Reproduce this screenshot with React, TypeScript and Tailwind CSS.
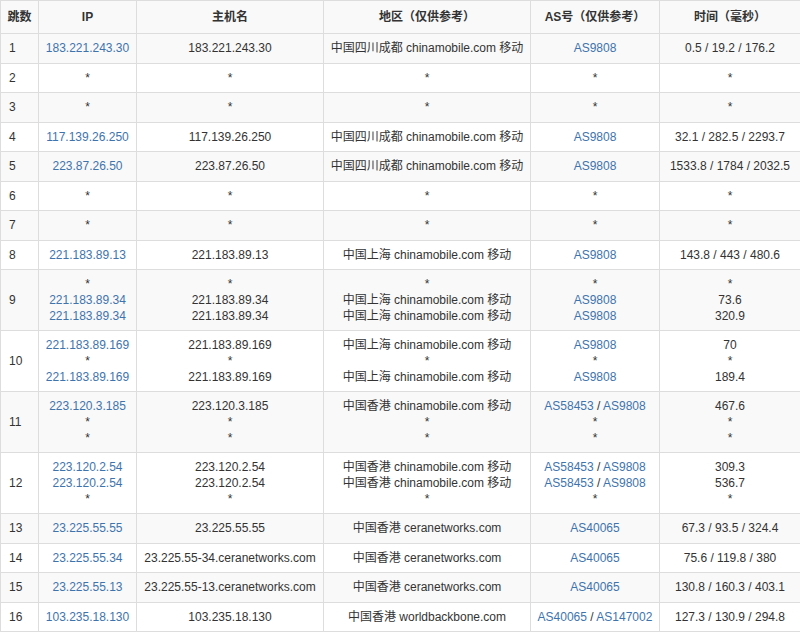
const rows: { n: number; ip: string[]; host: string[]; area: string[]; as: string[][]; time: string[] }[] = [
  { n: 1, ip: ['183.221.243.30'], host: ['183.221.243.30'], area: ['中国四川成都 chinamobile.com 移动'], as: [['AS9808']], time: ['0.5 / 19.2 / 176.2'] },
  { n: 2, ip: ['*'], host: ['*'], area: ['*'], as: [['*']], time: ['*'] },
  { n: 3, ip: ['*'], host: ['*'], area: ['*'], as: [['*']], time: ['*'] },
  { n: 4, ip: ['117.139.26.250'], host: ['117.139.26.250'], area: ['中国四川成都 chinamobile.com 移动'], as: [['AS9808']], time: ['32.1 / 282.5 / 2293.7'] },
  { n: 5, ip: ['223.87.26.50'], host: ['223.87.26.50'], area: ['中国四川成都 chinamobile.com 移动'], as: [['AS9808']], time: ['1533.8 / 1784 / 2032.5'] },
  { n: 6, ip: ['*'], host: ['*'], area: ['*'], as: [['*']], time: ['*'] },
  { n: 7, ip: ['*'], host: ['*'], area: ['*'], as: [['*']], time: ['*'] },
  { n: 8, ip: ['221.183.89.13'], host: ['221.183.89.13'], area: ['中国上海 chinamobile.com 移动'], as: [['AS9808']], time: ['143.8 / 443 / 480.6'] },
  { n: 9, ip: ['*', '221.183.89.34', '221.183.89.34'], host: ['*', '221.183.89.34', '221.183.89.34'], area: ['*', '中国上海 chinamobile.com 移动', '中国上海 chinamobile.com 移动'], as: [['*'], ['AS9808'], ['AS9808']], time: ['*', '73.6', '320.9'] },
  { n: 10, ip: ['221.183.89.169', '*', '221.183.89.169'], host: ['221.183.89.169', '*', '221.183.89.169'], area: ['中国上海 chinamobile.com 移动', '*', '中国上海 chinamobile.com 移动'], as: [['AS9808'], ['*'], ['AS9808']], time: ['70', '*', '189.4'] },
  { n: 11, ip: ['223.120.3.185', '*', '*'], host: ['223.120.3.185', '*', '*'], area: ['中国香港 chinamobile.com 移动', '*', '*'], as: [['AS58453', 'AS9808'], ['*'], ['*']], time: ['467.6', '*', '*'] },
  { n: 12, ip: ['223.120.2.54', '223.120.2.54', '*'], host: ['223.120.2.54', '223.120.2.54', '*'], area: ['中国香港 chinamobile.com 移动', '中国香港 chinamobile.com 移动', '*'], as: [['AS58453', 'AS9808'], ['AS58453', 'AS9808'], ['*']], time: ['309.3', '536.7', '*'] },
  { n: 13, ip: ['23.225.55.55'], host: ['23.225.55.55'], area: ['中国香港 ceranetworks.com'], as: [['AS40065']], time: ['67.3 / 93.5 / 324.4'] },
  { n: 14, ip: ['23.225.55.34'], host: ['23.225.55-34.ceranetworks.com'], area: ['中国香港 ceranetworks.com'], as: [['AS40065']], time: ['75.6 / 119.8 / 380'] },
  { n: 15, ip: ['23.225.55.13'], host: ['23.225.55-13.ceranetworks.com'], area: ['中国香港 ceranetworks.com'], as: [['AS40065']], time: ['130.8 / 160.3 / 403.1'] },
  { n: 16, ip: ['103.235.18.130'], host: ['103.235.18.130'], area: ['中国香港 worldbackbone.com'], as: [['AS40065', 'AS147002']], time: ['127.3 / 130.9 / 294.8'] },
];

function Lines({ items, link }: { items: string[]; link?: boolean }) {
  return (
    <>
      {items.map((t, i) => (
        <div key={i} className={t !== '*' && link ? 'text-[#3e74ad]' : ''}>
          {t}
        </div>
      ))}
    </>
  );
}

export default function App() {
  const td = 'border border-[#dddddd] p-0 text-center align-middle whitespace-nowrap overflow-hidden';
  return (
    <div className="h-[635px] w-[800px] overflow-hidden bg-white text-[12px] leading-[16px] text-[#333]" style={{ fontFamily: '"Liberation Sans", "Noto Sans CJK SC", sans-serif' }}>
      <table className="w-[800px] table-fixed border-collapse">
        <colgroup>
          <col className="w-[38px]" />
          <col className="w-[98px]" />
          <col className="w-[187px]" />
          <col className="w-[207px]" />
          <col className="w-[129px]" />
          <col className="w-[141px]" />
        </colgroup>
        <thead>
          <tr className="h-[33px] bg-[#f9f9f9] font-bold">
            <th className={td}>跳数</th>
            <th className={td}>IP</th>
            <th className={td}>主机名</th>
            <th className={td}>地区（仅供参考）</th>
            <th className={td}>AS号（仅供参考）</th>
            <th className={td}>时间（毫秒）</th>
          </tr>
        </thead>
        <tbody>
          {rows.map((r) => (
            <tr key={r.n} className={`${r.ip.length > 1 ? 'h-[61px]' : 'h-[29.5px]'} ${r.n % 2 ? 'bg-[#f9f9f9]' : 'bg-white'}`}>
              <td className={`${td} text-left pl-2`}>{r.n}</td>
              <td className={td}><Lines items={r.ip} link /></td>
              <td className={td}><Lines items={r.host} /></td>
              <td className={td}><Lines items={r.area} /></td>
              <td className={td}>
                {r.as.map((a, i) => (
                  <div key={i}>
                    {a.map((x, j) => (
                      <span key={j}>
                        {j > 0 && ' / '}
                        <span className={x !== '*' ? 'text-[#3e74ad]' : ''}>{x}</span>
                      </span>
                    ))}
                  </div>
                ))}
              </td>
              <td className={td}><Lines items={r.time} /></td>
            </tr>
          ))}
        </tbody>
      </table>
    </div>
  );
}
